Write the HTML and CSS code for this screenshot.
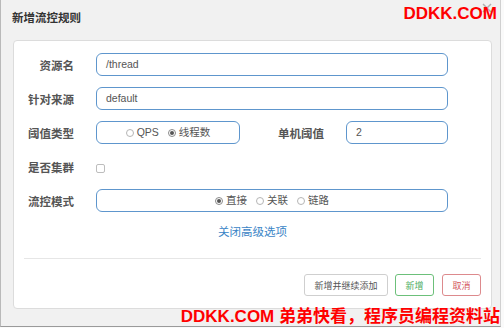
FILE: index.html
```html
<!DOCTYPE html>
<html lang="zh-CN">
<head>
    <meta charset="UTF-8">
    <meta name="viewport" content="width=device-width, initial-scale=1.0">
    <title>新增流控规则</title>
    <link rel="stylesheet" href="styles.css">
</head>
<body>
    <div class="modal">
        <div class="modal-header">
            <h4 class="modal-title">新增流控规则</h4>
            <svg class="close" width="10" height="10" viewBox="0 0 10 10">
                <path d="M1 1L9 9M9 1L1 9" stroke="#b0b0b0" stroke-width="1.5" fill="none"/>
            </svg>
        </div>

        <div class="panel">
            <div class="form">
                <div class="row">
                    <span class="label">资源名</span>
                    <div class="input wide">/thread</div>
                </div>
                <div class="row">
                    <span class="label">针对来源</span>
                    <div class="input wide">default</div>
                </div>
                <div class="row">
                    <span class="label">阈值类型</span>
                    <div class="input group small">
                        <span class="radio"></span><span class="radio-text">QPS</span>
                        <span class="radio checked"></span><span class="radio-text">线程数</span>
                    </div>
                    <span class="label label-mid">单机阈值</span>
                    <div class="input narrow">2</div>
                </div>
                <div class="row">
                    <span class="label">是否集群</span>
                    <span class="checkbox"></span>
                </div>
                <div class="row">
                    <span class="label">流控模式</span>
                    <div class="input group wide">
                        <span class="radio checked"></span><span class="radio-text">直接</span>
                        <span class="radio"></span><span class="radio-text">关联</span>
                        <span class="radio"></span><span class="radio-text">链路</span>
                    </div>
                </div>
            </div>

            <div class="link-row"><a class="link">关闭高级选项</a></div>

            <div class="divider"></div>

            <div class="footer">
                <button class="btn">新增并继续添加</button>
                <button class="btn btn-ok">新增</button>
                <button class="btn btn-cancel">取消</button>
            </div>
        </div>

        <div class="mark mark-top">DDKK.COM</div>
        <div class="mark mark-bottom">DDKK.COM 弟弟快看，程序员编程资料站</div>
    </div>
</body>
</html>
```

FILE: styles.css
```css
body {
    margin: 0;
    background: #fafafa;
    font-family: 'Noto Sans CJK SC', 'Noto Sans', sans-serif;
    color: #555;
}

.modal {
    position: relative;
    width: 499px;
    height: 326px;
    background: #f1f1f1;
    border-left: 1px solid #b9b9b9;
    border-right: 1px solid #d0d0d0;
    border-bottom: 1px solid #9a9a9a;
    overflow: hidden;
}

.modal-header {
    height: 40px;
    padding-left: 11px;
    display: flex;
    align-items: center;
}

.modal-title {
    margin: 0;
    font-size: 11.5px;
    font-weight: 700;
    color: #333;
    line-height: 16px;
    margin-top: -6px;
}

.close {
    position: absolute;
    top: 3px;
    right: 8px;
}

.panel {
    box-sizing: border-box;
    width: 479px;
    height: 269px;
    margin-left: 12px;
    background: #fff;
    border: 1px solid #dcdcdc;
    border-radius: 4px;
}

.form {
    padding-top: 12px;
    display: flex;
    flex-direction: column;
    gap: 11px;
}

.row {
    display: flex;
    align-items: center;
    height: 23px;
}

.label {
    width: 60px;
    margin-right: 22px;
    text-align: right;
    font-size: 11.5px;
    font-weight: 700;
    color: #555;
}

.label-mid {
    width: 84px;
}

.input {
    box-sizing: border-box;
    height: 23px;
    border: 1px solid #5e96cd;
    border-radius: 6px;
    padding-left: 9px;
    font-size: 10.5px;
    line-height: 21px;
    color: #555;
    font-family: 'Liberation Sans', 'Noto Sans CJK SC', sans-serif;
}

.wide {
    width: 352px;
}

.small {
    width: 144px;
}

.narrow {
    width: 102px;
}

.group {
    display: flex;
    align-items: center;
    justify-content: center;
    padding-left: 0;
}

.radio {
    box-sizing: border-box;
    width: 8px;
    height: 8px;
    border: 1px solid #b5b5b5;
    border-radius: 50%;
    margin-right: 3px;
    display: flex;
    align-items: center;
    justify-content: center;
}

.radio.checked {
    border-color: #8a8a8a;
}

.radio.checked::after {
    content: '';
    width: 4px;
    height: 4px;
    border-radius: 50%;
    background: #555;
}

.radio-text {
    font-size: 10.5px;
    margin-right: 9px;
    color: #555;
    font-family: 'Liberation Sans', 'Noto Sans CJK SC', sans-serif;
}

.radio-text:last-child {
    margin-right: 0;
}

.checkbox {
    box-sizing: border-box;
    width: 9px;
    height: 9px;
    margin-top: 3px;
    border: 1px solid #bdbdbd;
    border-radius: 2px;
}

.link-row {
    margin-top: 9px;
    text-align: center;
    line-height: 16px;
}

.link {
    font-size: 11.5px;
    color: #3a84c6;
}

.divider {
    height: 1px;
    margin: 19px 10px 0;
    background: #e6e6e6;
}

.footer {
    margin-top: 15px;
    padding-right: 10px;
    display: flex;
    justify-content: flex-end;
    gap: 7px;
}

.btn {
    height: 22px;
    padding: 0 9.5px;
    background: #fff;
    border: 1px solid #cfcfcf;
    border-radius: 3px;
    font-family: 'Noto Sans CJK SC', sans-serif;
    font-size: 9px;
    color: #555;
}

.btn-ok {
    border-color: #6cc07a;
    color: #4fae5f;
}

.btn-cancel {
    margin-left: 1px;
    border-color: #dd8a8d;
    color: #d4585d;
}

.mark {
    position: absolute;
    font-family: 'Liberation Sans', 'Noto Sans CJK SC', sans-serif;
    font-weight: 700;
    font-size: 17px;
    line-height: 20px;
    color: #f00;
    white-space: nowrap;
}

.mark-top {
    top: 4px;
    right: 3px;
}

.mark-bottom {
    top: 307px;
    right: 0;
}
```
